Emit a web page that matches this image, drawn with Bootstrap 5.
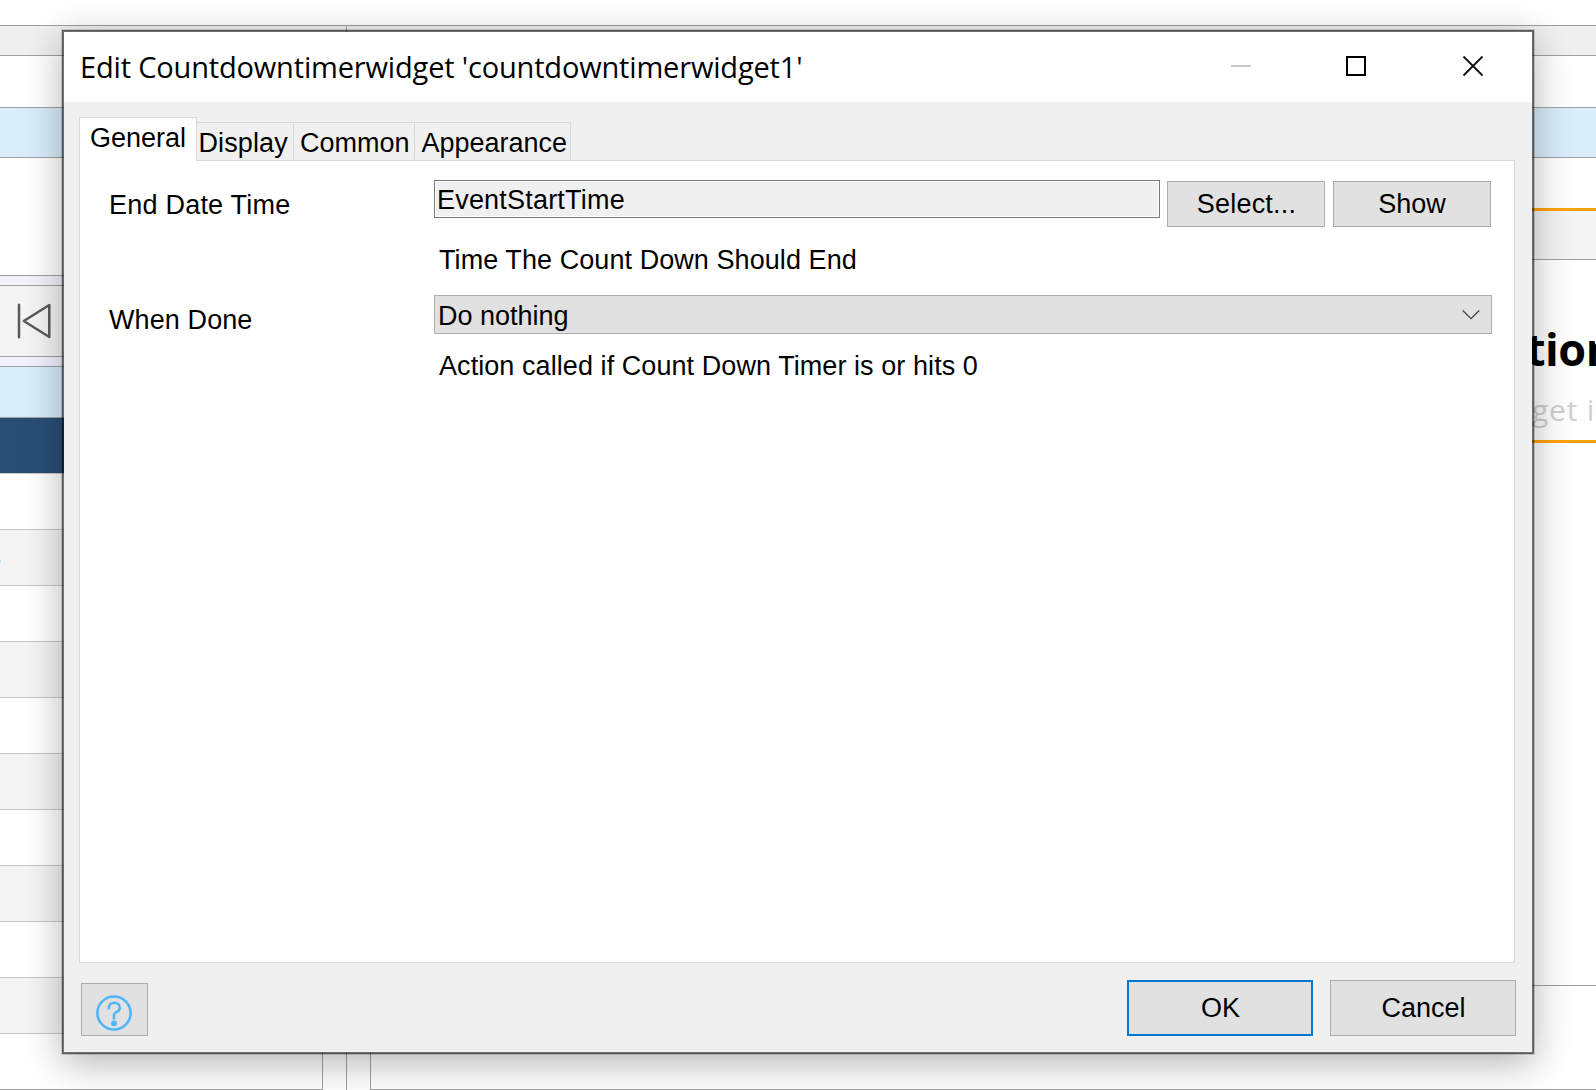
<!DOCTYPE html>
<html lang="en">
<head>
<meta charset="utf-8">
<title>Edit Countdowntimerwidget</title>
<link href="https://cdn.jsdelivr.net/npm/bootstrap@5.3.0/dist/css/bootstrap.min.css" rel="stylesheet">
<style>
body{width:1596px;height:1090px;overflow:hidden;background:#fff;color:#000;font:27px/38px "Liberation Sans",Arial,sans-serif}
.topbar{height:26px;border-bottom:1px solid #a0a0a0}
.workspace{height:1064px}
.pane-left{width:347px;border-right:1px solid #a0a0a0}
.strip{height:30px;background:#f0f0f0;border-bottom:1px solid #a0a0a0}
.blank{height:52px;border-bottom:1px solid #a0a0a0}
.sky{height:50px;background:#d9edfb;border-bottom:1px solid #a0a0a0}
.sky-tall{height:51px}
.tall{height:118px;border-bottom:1px solid #a0a0a0}
.gutter{height:10px;background:#f2f2fd;border-bottom:1px solid #a0a0a0}
.playbar{height:71px;background:#f4f4f4;border-bottom:1px solid #a0a0a0;padding-left:17px}
.navy{height:56px;background:#294e76;border-bottom:1px solid #c8c8c8}
.tree-row{height:56px;border-bottom:1px solid #c8c8c8}
.tree-row:nth-child(even){background:#f4f4f4}
.tree-row:last-child{border-bottom:1px solid #a0a0a0}
.tree{width:323px;border-right:1px solid #a0a0a0}
.tick{width:1px;height:3px;background:#a9ecf8;margin-top:30px}
.editor{border-left:1px solid #a0a0a0;margin-left:23px;border-bottom:1px solid #a0a0a0}
.slot{height:53px;border-bottom:3px solid #ffa200}
.slot-head{height:49px;background:#f4f4f4;border-bottom:1px solid #a0a0a0}
.slot-body{height:183px;border-bottom:3px solid #ffa200;padding-left:1159px;white-space:nowrap;font-family:"Open Sans","Noto Sans",sans-serif}
.slot-title{font-size:45px;font-weight:700;line-height:60px;padding-top:59px;margin-left:-4px;letter-spacing:-.5px}
.slot-hint{font-size:30px;line-height:40px;color:#d0d0d0;margin-top:11px;padding-left:2px;letter-spacing:.8px}
.lower{height:543px;border-bottom:1px solid #a0a0a0}
.foot-gap{height:103px}
.dialog-win{position:absolute;left:62px;top:30px;width:1472px;height:1024px;border:2px solid rgba(0,0,0,.54);background:#f0f0f0;background-clip:padding-box;box-shadow:0 0 0 1px rgba(0,0,0,.13),0 9px 36px rgba(0,0,0,.3)}
.titlebar{height:70px;background:#fff;padding-left:16px;font:29px/70px "Open Sans","Noto Sans",sans-serif}
.caption-text{white-space:nowrap;letter-spacing:-.17px}
.caption-btns{width:352px;height:70px}
.tabs{height:58px;padding-left:15px;align-items:flex-end;margin-bottom:1px}
.tabs .nav-link{position:relative;border:1px solid #d9d9d9;border-radius:0;color:#000;padding:0;height:39px;line-height:41px;background:#f0f0f0;margin:0 0 -1px -1px}
.tabs .nav-link.active{background:#fff;border-bottom:0;height:44px;line-height:41px;width:118px;padding:0 0 0 10px;margin-left:0}
.tabs .tab-a{width:98px;padding-left:1.5px;letter-spacing:.1px}
.tabs .tab-b{width:122px;padding-left:6px}
.tabs .tab-c{width:157px;padding-left:6.5px}
.sheet{margin:-1px 17px 0 15px;width:1436px;height:803px;background:#fff;border:1px solid #d9d9d9;padding:19px 22px 0 28px}
.lbl{width:325px;height:38px;margin:6px 0 0 1px;flex:none;letter-spacing:.22px}
.lbl-when{letter-spacing:.1px}
.winbtn{border:1px solid #adadad;border-radius:0;background:#e1e1e1;color:#000;font-size:27px;line-height:1;padding:1px 0 0}
.sel,.sho{width:158px;height:46px;margin-top:1px}
.sel{margin-left:7px;letter-spacing:.2px;padding-left:1px}
.sho{margin-left:8px}
.field{width:726px;height:38px;background:#f0f0f0;border:1px solid #7a7a7a;box-shadow:inset 0 0 0 1px #fff;line-height:39px;padding:0 0 0 2px;letter-spacing:.2px}
.drop{width:1058px;height:39px;background:#e1e1e1;border:1px solid #adadad;line-height:41px;padding:0 11px 0 3px}
.hint{padding-left:331px;letter-spacing:.07px}
.hint-a{margin-top:14px}
.when{margin-top:16px}
.hint-b{margin-top:8px}
.foot{padding:17px 16px 0 17px}
.foot .winbtn{width:186px;height:56px}
.foot .help{width:67px;height:53px;margin-top:3px;padding:0}
.foot .winbtn.okay{border:2px solid #0078d7;padding-left:1px}
.foot .cancel{margin-left:17px;padding-left:1px}
</style>
<script src="https://cdn.jsdelivr.net/npm/bootstrap@5.3.0/dist/js/bootstrap.bundle.min.js"></script>
</head>
<body>
<div class="topbar"></div>
<div class="workspace d-flex">
  <div class="pane-left flex-shrink-0">
    <div class="strip"></div><div class="blank"></div><div class="sky"></div><div class="tall"></div><div class="gutter"></div>
    <div class="playbar d-flex align-items-center">
      <svg width="35" height="36" viewBox="0 0 35 36" fill="none" stroke="#5a5a5a" stroke-width="2.500" stroke-linejoin="round" stroke-linecap="round"><path d="M2 1.800V34.200M32.300 2V34L6.800 18Z"/></svg>
    </div>
    <div class="gutter"></div>
    <div class="sky sky-tall"></div><div class="navy"></div>
    <div class="tree">
      <div class="tree-row"></div><div class="tree-row d-flex"><div class="tick"></div></div><div class="tree-row"></div><div class="tree-row"></div><div class="tree-row"></div><div class="tree-row"></div><div class="tree-row"></div><div class="tree-row"></div><div class="tree-row"></div><div class="tree-row"></div><div class="tree-row"></div>
    </div>
  </div>
  <div class="flex-grow-1">
    <div class="strip"></div>
    <div class="editor">
      <div class="blank"></div><div class="sky"></div>
      <div class="slot"></div><div class="slot-head"></div>
      <div class="slot-body"><div class="slot-title">tion</div><div class="slot-hint">get i</div></div>
      <div class="lower"></div><div class="foot-gap"></div>
    </div>
  </div>
</div>

<div class="dialog-win" role="dialog">
  <div class="titlebar d-flex justify-content-between">
    <span class="caption-text">Edit Countdowntimerwidget 'countdowntimerwidget1'</span>
    <svg class="caption-btns" viewBox="0 0 352 70" fill="none"><path d="M51 34H71" stroke="#c8c8c8" stroke-width="2"/><rect x="167" y="25" width="18" height="18" stroke="#000" stroke-width="2"/><path d="M283.500 24.500L302.500 43.500M302.500 24.500L283.500 43.500" stroke="#111" stroke-width="1.800"/></svg>
  </div>
  <nav class="nav tabs">
    <a class="nav-link active">General</a>
    <a class="nav-link tab-a">Display</a>
    <a class="nav-link tab-b">Common</a>
    <a class="nav-link tab-c">Appearance</a>
  </nav>
  <div class="sheet">
    <div class="d-flex">
      <div class="lbl">End Date Time</div>
      <div class="field">EventStartTime</div>
      <button class="btn winbtn sel">Select...</button>
      <button class="btn winbtn sho">Show</button>
    </div>
    <div class="hint hint-a">Time The Count Down Should End</div>
    <div class="d-flex when">
      <div class="lbl lbl-when">When Done</div>
      <div class="drop d-flex justify-content-between">
        <span>Do nothing</span>
        <svg width="18" height="37" viewBox="0 0 18 37" fill="none" stroke="#444" stroke-width="1.300"><path d="M.8 14.500L9 22.700L17.200 14.500"/></svg>
      </div>
    </div>
    <div class="hint hint-b">Action called if Count Down Timer is or hits 0</div>
  </div>
  <div class="foot d-flex">
    <button class="btn winbtn help">
      <svg class="d-block" width="65" height="51" viewBox="0 0 65 51" fill="none" stroke="#4fb5f8" stroke-width="2.500"><circle cx="32" cy="29" r="16.600"/><path d="M26.800 25.500V24C26.800 17 37.800 17 37.800 24C37.800 28.500 32 27.500 32 30.500V35.500"/><circle cx="32" cy="39.300" r="2.900" fill="#4fb5f8" stroke="none"/></svg>
    </button>
    <button class="btn winbtn okay ms-auto">OK</button>
    <button class="btn winbtn cancel">Cancel</button>
  </div>
</div>
</body>
</html>
